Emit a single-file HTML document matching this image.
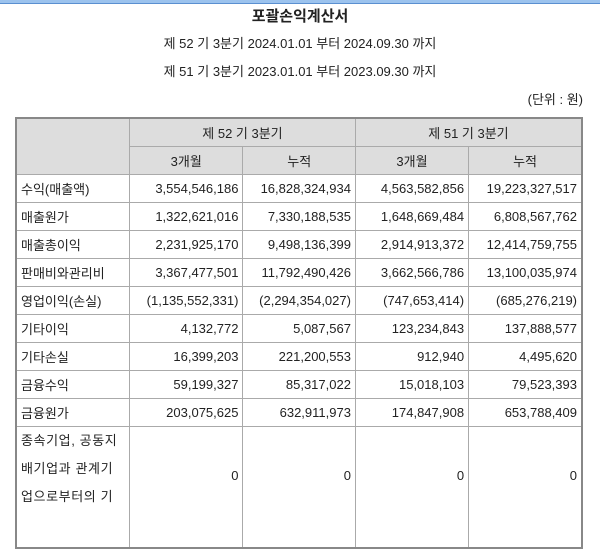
<!DOCTYPE html>
<html><head><meta charset="utf-8"><style>
body{margin:0;width:600px;height:488px;overflow:hidden;background:#fff;font-family:"Liberation Sans","Noto Sans CJK KR",sans-serif;font-size:13px;color:#222;position:relative}
.bar{position:absolute;top:0;left:0;width:600px;height:3px;background:#9cc3ee;border-bottom:1px solid #5a8fd0}
.t{position:absolute;left:0;width:600px;text-align:center}
table{position:absolute;left:15px;top:117px;border-collapse:collapse;width:568px;border:2px solid #888}
td{border:1px solid #aaa;height:27px;padding:0 4px;white-space:nowrap}
.h td{background:#ddd;text-align:center}
td.n{text-align:right}
td.z{vertical-align:top;padding-top:41px;line-height:15px}
</style></head><body>
<div class="bar"></div>
<div class="t" style="top:5px;font-size:15px;font-weight:bold">포괄손익계산서</div>
<div class="t" style="top:33px">제 52 기 3분기 2024.01.01 부터 2024.09.30 까지</div>
<div class="t" style="top:61px">제 51 기 3분기 2023.01.01 부터 2023.09.30 까지</div>
<div style="position:absolute;top:89px;right:17px">(단위 : 원)</div>
<table>
<colgroup><col style="width:113px"><col style="width:114px"><col style="width:113px"><col style="width:114px"><col style="width:114px"></colgroup>
<tr class="h"><td rowspan="2" style="background:#ddd"></td><td colspan="2">제 52 기 3분기</td><td colspan="2">제 51 기 3분기</td></tr>
<tr class="h"><td>3개월</td><td>누적</td><td>3개월</td><td>누적</td></tr>
<tr><td>수익(매출액)</td><td class="n">3,554,546,186</td><td class="n">16,828,324,934</td><td class="n">4,563,582,856</td><td class="n">19,223,327,517</td></tr>
<tr><td>매출원가</td><td class="n">1,322,621,016</td><td class="n">7,330,188,535</td><td class="n">1,648,669,484</td><td class="n">6,808,567,762</td></tr>
<tr><td>매출총이익</td><td class="n">2,231,925,170</td><td class="n">9,498,136,399</td><td class="n">2,914,913,372</td><td class="n">12,414,759,755</td></tr>
<tr><td>판매비와관리비</td><td class="n">3,367,477,501</td><td class="n">11,792,490,426</td><td class="n">3,662,566,786</td><td class="n">13,100,035,974</td></tr>
<tr><td>영업이익(손실)</td><td class="n">(1,135,552,331)</td><td class="n">(2,294,354,027)</td><td class="n">(747,653,414)</td><td class="n">(685,276,219)</td></tr>
<tr><td>기타이익</td><td class="n">4,132,772</td><td class="n">5,087,567</td><td class="n">123,234,843</td><td class="n">137,888,577</td></tr>
<tr><td>기타손실</td><td class="n">16,399,203</td><td class="n">221,200,553</td><td class="n">912,940</td><td class="n">4,495,620</td></tr>
<tr><td>금융수익</td><td class="n">59,199,327</td><td class="n">85,317,022</td><td class="n">15,018,103</td><td class="n">79,523,393</td></tr>
<tr><td>금융원가</td><td class="n">203,075,625</td><td class="n">632,911,973</td><td class="n">174,847,908</td><td class="n">653,788,409</td></tr>
<tr><td style="white-space:normal;line-height:28px;padding:0 4px;vertical-align:top;height:120px"><div style="width:104px;letter-spacing:0.6px">종속기업, 공동지<br>배기업과 관계기<br>업으로부터의 기</div></td><td class="n z">0</td><td class="n z">0</td><td class="n z">0</td><td class="n z">0</td></tr>
</table>
</body></html>
